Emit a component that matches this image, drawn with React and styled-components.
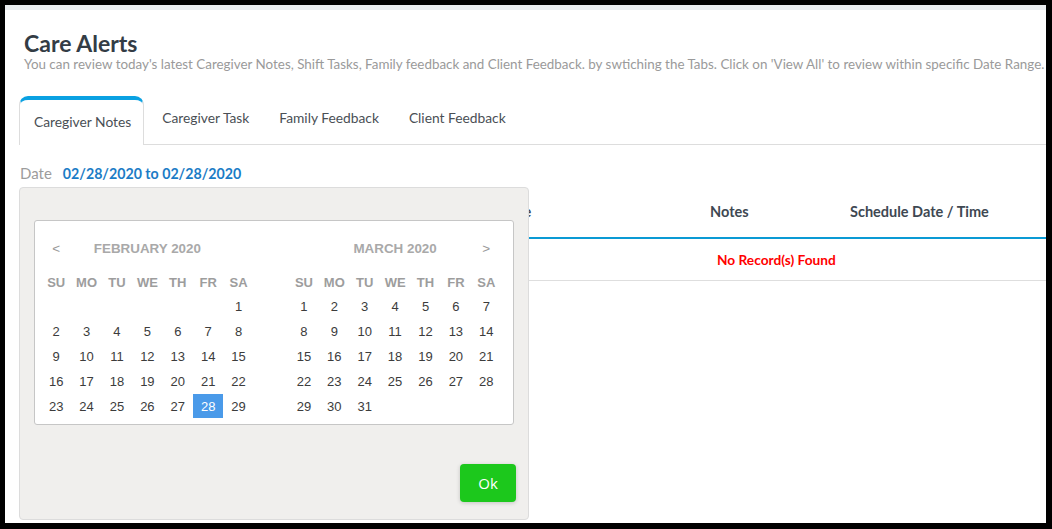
import React from "react";
import styled, { createGlobalStyle } from "styled-components";

const Global = createGlobalStyle`
  html, body { margin: 0; padding: 0; background: #000; }
  body { width: 1052px; height: 529px; overflow: hidden; font-family: Lato, "Open Sans", sans-serif; }
`;

const Frame = styled.div`
  margin: 5px 6px 0 5px;
  height: 518px;
  background: #fff;
  border-top: 5px solid #e9ecef;
  box-sizing: border-box;
  overflow: hidden;
  padding: 20px 0 0 14px;
`;

const Title = styled.h1`
  margin: 0 0 0 5px;
  font-size: 23px;
  line-height: 26px;
  font-weight: 700;
  color: #333c45;
`;

const Subtitle = styled.p`
  margin: 0 0 0 5px;
  font-size: 13.4px;
  line-height: 16px;
  color: #9a9a9a;
  white-space: nowrap;
`;

const TabBar = styled.div`
  display: flex;
  align-items: flex-start;
  margin-top: 24px;
  height: 48px;
  border-bottom: 1px solid #ddd;
  box-sizing: content-box;
`;

const Tab = styled.div`
  font-size: 13.8px;
  line-height: 16px;
  color: #4a4f55;
  white-space: nowrap;
  box-sizing: border-box;
  ${(p) =>
    p.$active
      ? `
    height: 49px;
    padding: 14px 12px 0 14px;
    background: #fff;
    border: 1px solid #ddd;
    border-top: 4px solid #0aa1e2;
    border-bottom: none;
    border-radius: 9px 9px 0 0;
    margin-right: 3px;
  `
      : `
    padding: 14px 15px 0 15px;
  `}
`;

const Section = styled.div`
  position: relative;
`;

const DateRow = styled.div`
  display: flex;
  align-items: baseline;
  gap: 11px;
  margin: 19px 0 0 1px;
  line-height: 18px;
`;

const DateLabel = styled.span`
  font-size: 15px;
  color: #9c9c9c;
`;

const DateValue = styled.span`
  font-size: 14.2px;
  color: #1b7cc6;
  font-weight: 700;
`;

const Table = styled.div`
  margin-top: 5px;
`;

const Row = styled.div`
  display: grid;
  grid-template-columns: 401px 282px 140px 1fr;
  align-items: center;
  height: ${(p) => p.$h}px;
  padding-bottom: ${(p) => p.$pb || 0}px;
  box-sizing: border-box;
  border-bottom: ${(p) => p.$line};
`;

const HeadCell = styled.div`
  padding-left: 8px;
  font-size: 14.5px;
  font-weight: 700;
  color: #3e4852;
  white-space: nowrap;
`;

const Empty = styled.div`
  grid-column: 1 / -1;
  padding-left: 698px;
  font-size: 13.7px;
  font-weight: 700;
  color: #ff0000;
`;

const Panel = styled.div`
  position: absolute;
  left: 0;
  top: 23px;
  width: 510px;
  height: 333px;
  box-sizing: border-box;
  background: #f0efed;
  border: 1px solid #dcdcdc;
  border-radius: 4px;
  padding: 32px 12px 0 14px;
  display: flex;
  flex-direction: column;
  align-items: flex-start;
`;

const CalBox = styled.div`
  width: 480px;
  height: 205px;
  box-sizing: border-box;
  background: #fff;
  border: 1px solid #c6c6c6;
  border-radius: 3px;
  padding: 15px 10px 6px 6px;
  display: flex;
  gap: 35px;
  font-family: "Liberation Sans", Arial, sans-serif;
`;

const Month = styled.div`
  display: grid;
  grid-template-columns: repeat(7, 30.4px);
  grid-template-rows: auto 22px repeat(5, 24px);
  row-gap: 1px;
`;

const MonthHead = styled.div`
  grid-column: 1 / -1;
  height: 24px;
  display: grid;
  grid-template-columns: 30.4px 1fr 30.4px;
  align-items: center;
  margin-bottom: 10px;
  color: #a9a9a9;
  font-size: 13.4px;
`;

const Nav = styled.span`
  text-align: center;
  font-size: 13.5px;
  color: #999;
`;

const MonthName = styled.span`
  text-align: center;
  font-weight: 700;
`;

const WeekDay = styled.div`
  display: flex;
  align-items: center;
  justify-content: center;
  font-size: 13px;
  font-weight: 700;
  color: #9d9d9d;
`;

const Day = styled.div`
  display: flex;
  align-items: center;
  justify-content: center;
  font-size: 13px;
  color: ${(p) => (p.$sel ? "#fff" : "#3c3c3c")};
  background: ${(p) => (p.$sel ? "#4a9ae9" : "transparent")};
`;

const OkButton = styled.button`
  align-self: flex-end;
  margin-top: 39px;
  width: 56px;
  height: 38px;
  border: none;
  border-radius: 4px;
  background: #1cc81c;
  color: #fff;
  font-family: "Open Sans", Lato, sans-serif;
  font-size: 15px;
  box-shadow: 0 1px 4px rgba(0, 0, 0, 0.18);
`;

const WEEK = ["SU", "MO", "TU", "WE", "TH", "FR", "SA"];

function MonthCal({ name, offset, days, prev, next, sel }) {
  const cells = [];
  for (let i = 0; i < offset; i++) cells.push(<Day key={"e" + i} />);
  for (let d = 1; d <= days; d++)
    cells.push(
      <Day key={d} $sel={d === sel}>
        {d}
      </Day>
    );
  return (
    <Month>
      <MonthHead>
        <Nav>{prev ? "<" : ""}</Nav>
        <MonthName>{name}</MonthName>
        <Nav>{next ? ">" : ""}</Nav>
      </MonthHead>
      {WEEK.map((w) => (
        <WeekDay key={w}>{w}</WeekDay>
      ))}
      {cells}
    </Month>
  );
}

export default function App() {
  return (
    <>
      <Global />
      <Frame>
        <Title>Care Alerts</Title>
        <Subtitle>
          You can review today's latest Caregiver Notes, Shift Tasks, Family feedback and Client Feedback. by swtiching the Tabs. Click on 'View All' to review within specific Date Range.
        </Subtitle>
        <TabBar>
          <Tab $active>Caregiver Notes</Tab>
          <Tab>Caregiver Task</Tab>
          <Tab>Family Feedback</Tab>
          <Tab>Client Feedback</Tab>
        </TabBar>
        <Section>
          <DateRow>
            <DateLabel>Date</DateLabel>
            <DateValue>02/28/2020 to 02/28/2020</DateValue>
          </DateRow>
          <Table>
            <Row $h={51} $pb={3} $line="2px solid #0a9ad4">
              <HeadCell>Client Name</HeadCell>
              <HeadCell>Caregiver Name</HeadCell>
              <HeadCell>Notes</HeadCell>
              <HeadCell>Schedule Date / Time</HeadCell>
            </Row>
            <Row $h={42} $pb={1} $line="1px solid #dedede">
              <Empty>No Record(s) Found</Empty>
            </Row>
          </Table>
          <Panel>
            <CalBox>
              <MonthCal name="FEBRUARY 2020" offset={6} days={29} prev sel={28} />
              <MonthCal name="MARCH 2020" offset={0} days={31} next />
            </CalBox>
            <OkButton>Ok</OkButton>
          </Panel>
        </Section>
      </Frame>
    </>
  );
}
